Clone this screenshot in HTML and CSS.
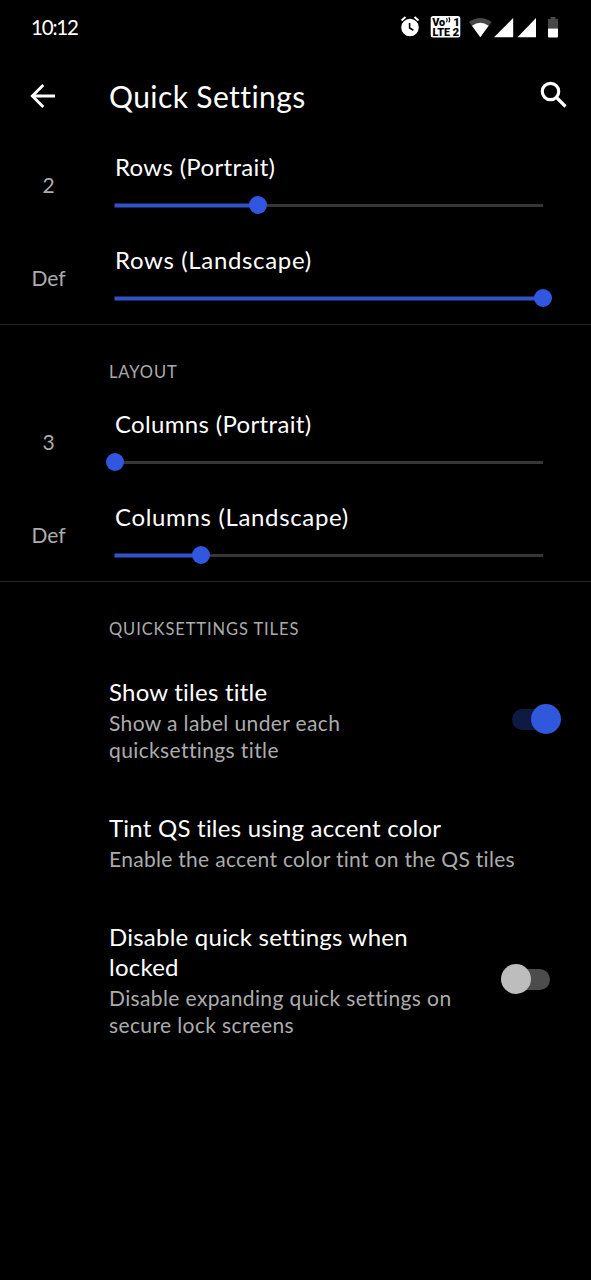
FILE: index.html
```
<!DOCTYPE html>
<html lang="en">
<head>
<meta charset="utf-8">
<title>Quick Settings</title>
<link rel="stylesheet" href="styles.css">
</head>
<body>
<header class="status">
  <span class="clock">10:12</span>
  <svg class="status-icons" viewBox="0 0 170 26" aria-hidden="true">
    <g fill="none" stroke="#fff">
      <circle cx="20" cy="13.500" r="7.600" fill="#fff" stroke-width="2.400"/>
      <path d="M11.500 6.500l4-3.400M28.500 6.500l-4-3.400" stroke-width="2"/>
      <path d="M19.600 9v5l3.800 2.300" stroke="#000" stroke-width="1.600"/>
    </g>
    <rect x="40.700" y="2" width="29.600" height="21.500" rx="2.500" fill="#fff"/>
    <g class="volte">
      <text x="42.200" y="12" textLength="13" lengthAdjust="spacingAndGlyphs">Vo</text>
      <text x="63.200" y="12">1</text>
      <text x="42.400" y="22" textLength="17.500" lengthAdjust="spacingAndGlyphs">LTE</text>
      <text x="62.600" y="22">2</text>
    </g>
    <path d="M56.500 4.200q1.400 1.800 0 4M58.800 3.400q1.800 2.400 0 5" fill="none" stroke="#000" stroke-width="1.100"/>
    <path d="M79 8Q90.300 0 101.600 8L90.300 23.300z" fill="#484848"/>
    <path d="M82 11.800Q90.300 5.600 98.600 11.800L90.300 23.300z" fill="#fff"/>
    <path d="M104 23.200L123.200 4v19.200zM127.500 23.200L146 4v19.200z" fill="#fff"/>
    <path d="M158 5h2.500v-2h5v2H168v9.500h-10z" fill="#484848"/>
    <path d="M158 14.500h10v8q0 1-1 1h-8q-1 0-1-1z" fill="#fff"/>
  </svg>
</header>

<div class="toolbar">
  <svg class="back" viewBox="0 0 26 26" aria-hidden="true"><path d="M25 13H3M13.300 2L2.300 13l11 11"/></svg>
  <h1 class="title">Quick Settings</h1>
  <svg class="search" viewBox="0 0 28 28" aria-hidden="true"><circle cx="10.500" cy="10.500" r="8.200"/><path d="M16.500 16.500l9 9"/></svg>
</div>

<main>
  <section class="group">
    <div class="slider-row">
      <span class="value">2</span>
      <div class="control"><span class="label">Rows (Portrait)</span>
        <div class="track"><div class="fill" style="width:33.33%"></div><div class="knob" style="left:33.33%"></div></div></div>
    </div>
    <div class="slider-row">
      <span class="value">Def</span>
      <div class="control"><span class="label wide">Rows (Landscape)</span>
        <div class="track"><div class="fill" style="width:100%"></div><div class="knob" style="left:100%"></div></div></div>
    </div>
  </section>

  <section class="group">
    <h2 class="caption">LAYOUT</h2>
    <div class="slider-row">
      <span class="value">3</span>
      <div class="control"><span class="label">Columns (Portrait)</span>
        <div class="track"><div class="knob" style="left:0%"></div></div></div>
    </div>
    <div class="slider-row">
      <span class="value">Def</span>
      <div class="control"><span class="label wide">Columns (Landscape)</span>
        <div class="track"><div class="fill" style="width:20%"></div><div class="knob" style="left:20%"></div></div></div>
    </div>
  </section>

  <section class="group tiles">
    <h2 class="caption">QUICKSETTINGS TILES</h2>
    <div class="item">
      <div class="copy">
        <h3 class="name">Show tiles title</h3>
        <p class="summary loose">Show a label under each<br>quicksettings title</p>
      </div>
      <div class="switch on"><div class="thumb"></div></div>
    </div>
    <div class="item">
      <div class="copy">
        <h3 class="name">Tint QS tiles using accent color</h3>
        <p class="summary">Enable the accent color tint on the QS tiles</p>
      </div>
    </div>
    <div class="item">
      <div class="copy">
        <h3 class="name">Disable quick settings when<br>locked</h3>
        <p class="summary loose">Disable expanding quick settings on<br>secure lock screens</p>
      </div>
      <div class="switch"><div class="thumb"></div></div>
    </div>
  </section>
</main>
</body>
</html>
```
FILE: styles.css
```
* {
  box-sizing: border-box;
}

body {
  margin: 0;
  min-height: 1280px;
  background: #000;
  color: #fff;
  font-family: Lato, "Open Sans", sans-serif;
}

h1, h2, h3, p {
  margin: 0;
  font-weight: 400;
}

.status {
  display: flex;
  justify-content: space-between;
  align-items: center;
  height: 56px;
  padding: 0 31px 0 31px;
}

.clock {
  margin-bottom: 2px;
  font-size: 20.5px;
  letter-spacing: -1.2px;
}

.status-icons {
  width: 170px;
  height: 26px;
  margin-bottom: 3px;
}

.volte text {
  font: 900 11.5px Roboto, sans-serif;
  fill: #000;
}

.toolbar {
  display: flex;
  align-items: center;
  height: 82px;
  padding: 0 23px 0 30px;
}

.back,
.search {
  fill: none;
  stroke: #fff;
  stroke-width: 2.8;
}

.back {
  width: 26px;
  height: 26px;
  margin-bottom: 2px;
}

.search {
  width: 28px;
  height: 28px;
  margin: 0 0 4px auto;
  stroke-width: 3.2;
}

.title {
  margin: 0 0 2px 53px;
  font-size: 30px;
  line-height: 40px;
  letter-spacing: 0.4px;
}

.group {
  border-bottom: 1px solid #222;
}

.tiles {
  border-bottom: 0;
}

.slider-row {
  display: flex;
  align-items: center;
  height: 93px;
}

.value {
  width: 97px;
  flex: none;
  text-align: center;
  font-size: 21px;
  color: #acacac;
}

.control {
  width: 428px;
  margin: 0 0 11px 18px;
}

.label {
  display: block;
  font-size: 24px;
  line-height: 30px;
  letter-spacing: 0.33px;
}

.wide {
  letter-spacing: 0.66px;
}

.track {
  position: relative;
  height: 3px;
  margin-top: 22px;
  background: #363636;
}

.fill {
  height: 3px;
  background: #3153c8;
  box-shadow: 0 0 0 0.5px #3153c8;
}

.knob {
  position: absolute;
  top: 50%;
  width: 18px;
  height: 18px;
  border-radius: 50%;
  background: #3157e0;
  transform: translate(-50%, -50%);
}

.caption {
  height: 70px;
  padding: 36px 0 0 109px;
  font-size: 16.5px;
  line-height: 22px;
  letter-spacing: 0.9px;
  color: #acacac;
}

.item {
  display: flex;
  justify-content: space-between;
  align-items: center;
  padding: 25px 41px 25px 109px;
}

.name {
  font-size: 24px;
  line-height: 30px;
  letter-spacing: 0.23px;
}

.summary {
  margin-top: 2px;
  font-size: 21px;
  line-height: 27px;
  letter-spacing: 0.3px;
  color: #acacac;
  white-space: nowrap;
}

.loose {
  letter-spacing: 0.38px;
}

.switch {
  position: relative;
  width: 38px;
  height: 21px;
  margin-bottom: 2px;
  border-radius: 11px;
  background: #4c4c4c;
}

.thumb {
  position: absolute;
  top: -5px;
  left: -11px;
  width: 30px;
  height: 30px;
  border-radius: 50%;
  background: #bdbdbd;
}

.on {
  background: #0f1a43;
}

.on .thumb {
  left: 19px;
  background: #3157dc;
}
```
